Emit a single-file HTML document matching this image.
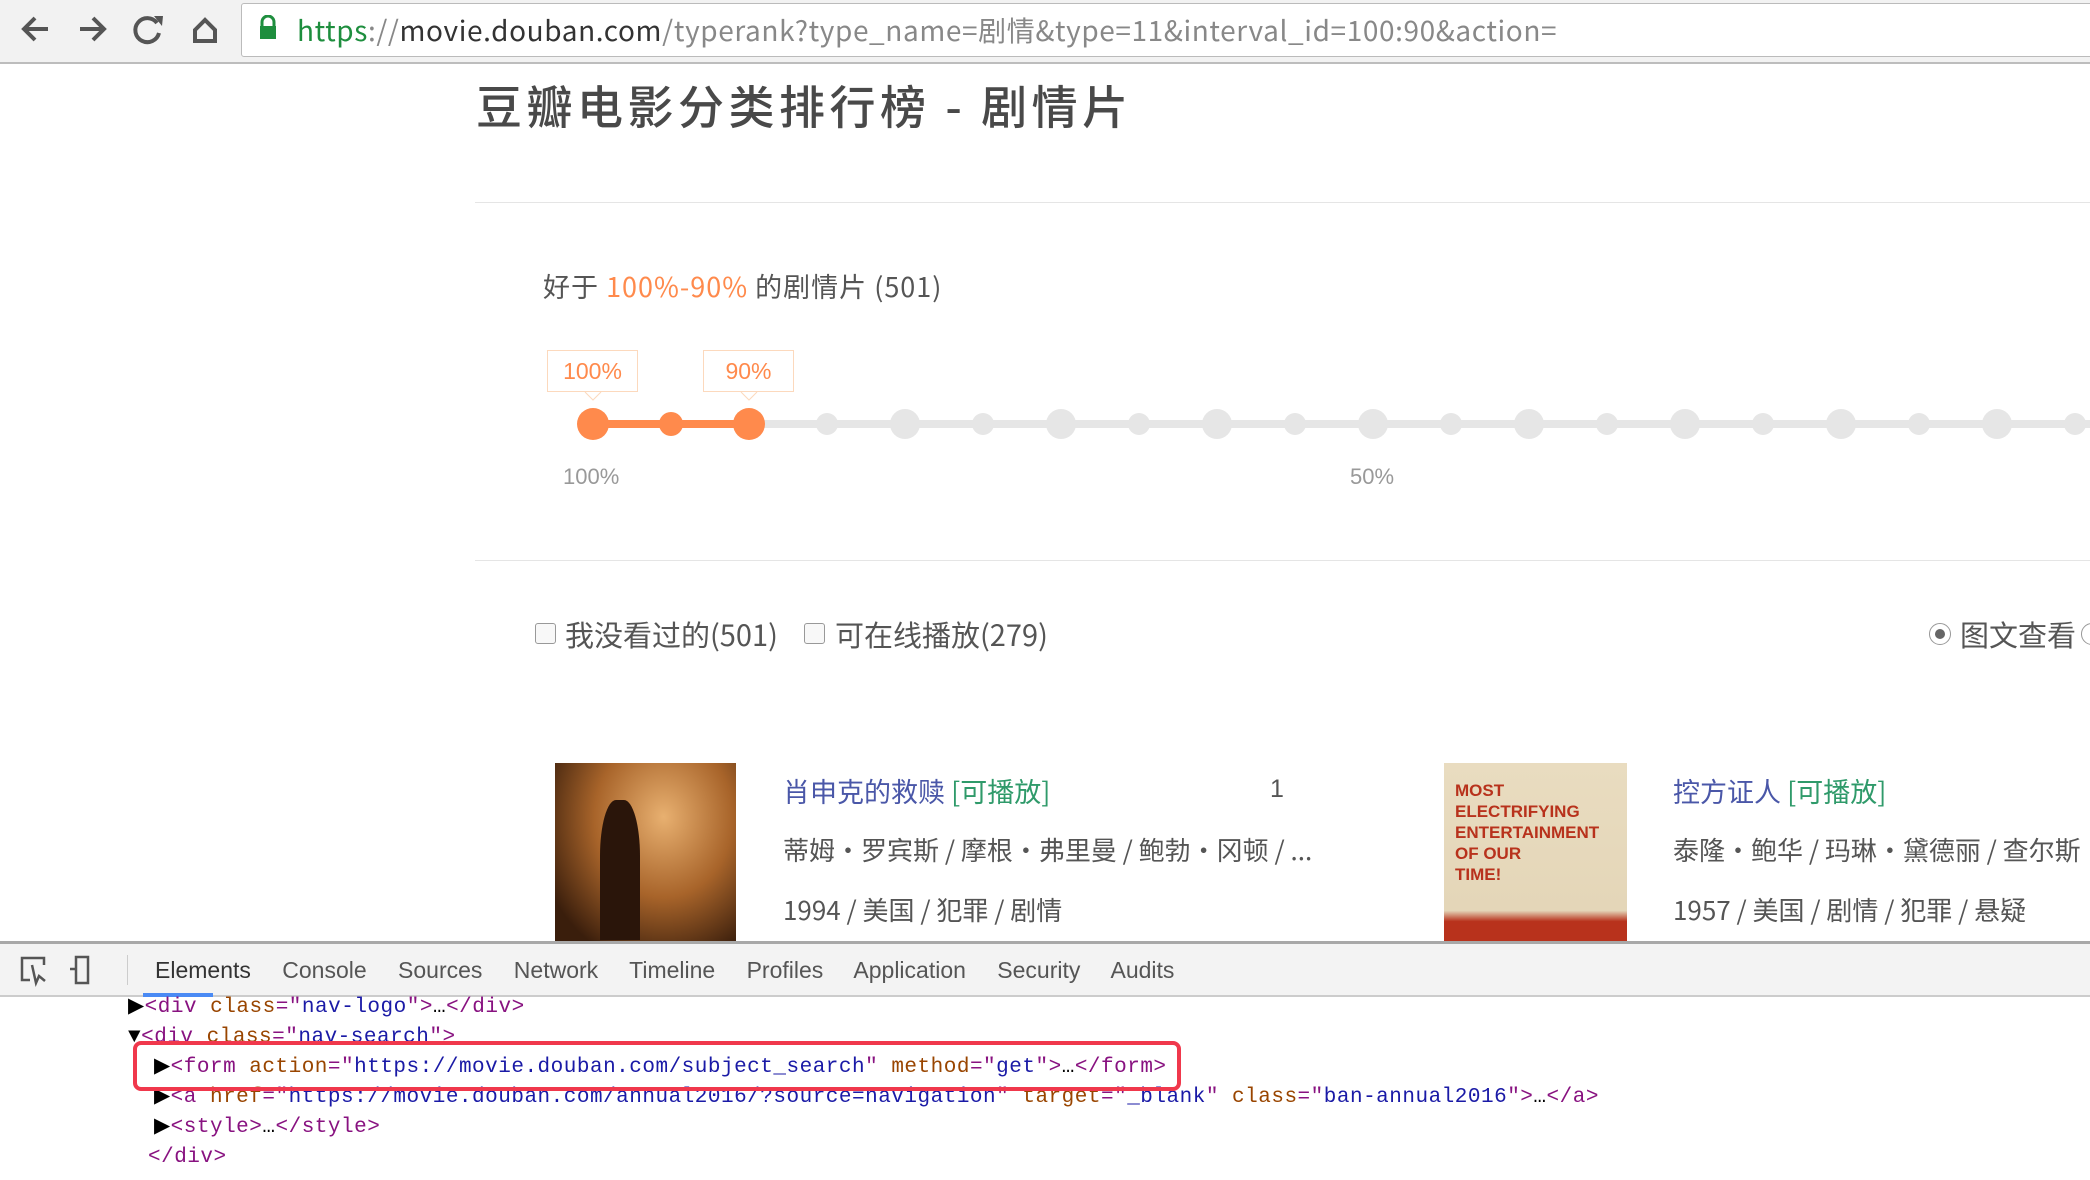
<!DOCTYPE html>
<html><head><meta charset="utf-8"><style>
*{margin:0;padding:0;box-sizing:border-box}
body{width:2090px;height:1180px;overflow:hidden;background:#fff;position:relative;font-family:"Liberation Sans","Noto Sans CJK SC",sans-serif}
.a{position:absolute;white-space:nowrap}
.cj{font-family:"Noto Sans CJK SC","Liberation Sans",sans-serif}
.mono{font-family:"Liberation Mono",monospace;font-size:21px;letter-spacing:0.5px}
.tg{color:#881280}.at{color:#994500}.av{color:#1a1aa6}
</style></head><body>
<div class="a" style="left:0;top:0;width:2090px;height:64px;background:#f2f2f2;border-bottom:2px solid #bdbdbd"></div>
<svg class="a" style="left:0;top:0" width="240" height="64">
<g stroke="#555" stroke-width="4" fill="none">
<path d="M48 29H24M35 18L24 29L35 40"/>
<path d="M80 29H104M93 18L104 29L93 40"/>
<path d="M157 23A12 12 0 1 0 159 33"/>
<path d="M195 30L205 20L215 30V41H195Z"/>
</g>
<path d="M154 16L163 16L162 26Z" fill="#555"/>
</svg>
<div class="a" style="left:241px;top:3px;width:1860px;height:54px;background:#fff;border:1px solid #bbb;border-radius:3px"></div>
<svg class="a" style="left:258px;top:15px" width="20" height="26"><path d="M4 11V7a6 6 0 0 1 12 0v4" stroke="#1e8e3e" stroke-width="3" fill="none"/><rect x="2" y="11" width="16" height="13" fill="#1e8e3e"/></svg>
<div class="a cj" style="left:297px;top:10px;font-size:28px;color:#333;letter-spacing:0.6px"><span style="color:#1e8e3e">https</span><span style="color:#888">://</span>movie.douban.com<span style="color:#888">/typerank?type_name=剧情&amp;type=11&amp;interval_id=100:90&amp;action=</span></div>
<div class="a cj" style="left:476px;top:72px;font-size:46px;color:#494949;font-weight:500;letter-spacing:4.5px">豆瓣电影分类排行榜 - 剧情片</div>
<div class="a" style="left:475px;top:202px;width:1620px;height:1px;background:#e5e5e5"></div>
<div class="a cj" style="left:543px;top:266px;font-size:27px;color:#555;letter-spacing:1px">好于 <span style="color:#ff8a4c">100%-90%</span> 的剧情片 (501)</div>
<div class="a" style="left:547px;top:350px;width:91px;height:42px;border:1px solid #fcd9bd;color:#ff8a4c;font-size:23px;text-align:center;line-height:40px;background:#fff">100%</div>
<div class="a" style="left:703px;top:350px;width:91px;height:42px;border:1px solid #fcd9bd;color:#ff8a4c;font-size:23px;text-align:center;line-height:40px;background:#fff">90%</div>
<svg class="a" style="left:0;top:380px" width="2090" height="70">
<line x1="593" y1="44" x2="2090" y2="44" stroke="#e6e6e6" stroke-width="8"/>
<line x1="593" y1="44" x2="749" y2="44" stroke="#ff8a4c" stroke-width="8"/>
<path d="M585 12L593 20L601 12" fill="#fff" stroke="#fcd9bd"/>
<path d="M741 12L749 20L757 12" fill="#fff" stroke="#fcd9bd"/>
<g fill="#e6e6e6">
<circle cx="827" cy="44" r="11"/><circle cx="905" cy="44" r="15"/><circle cx="983" cy="44" r="11"/><circle cx="1061" cy="44" r="15"/><circle cx="1139" cy="44" r="11"/><circle cx="1217" cy="44" r="15"/><circle cx="1295" cy="44" r="11"/><circle cx="1373" cy="44" r="15"/><circle cx="1451" cy="44" r="11"/><circle cx="1529" cy="44" r="15"/><circle cx="1607" cy="44" r="11"/><circle cx="1685" cy="44" r="15"/><circle cx="1763" cy="44" r="11"/><circle cx="1841" cy="44" r="15"/><circle cx="1919" cy="44" r="11"/><circle cx="1997" cy="44" r="15"/><circle cx="2075" cy="44" r="11"/>
</g>
<g fill="#ff8a4c"><circle cx="593" cy="44" r="16"/><circle cx="671" cy="44" r="12"/><circle cx="749" cy="44" r="16"/></g>
</svg>
<div class="a" style="left:563px;top:464px;font-size:22px;color:#999">100%</div>
<div class="a" style="left:1350px;top:464px;font-size:22px;color:#999">50%</div>
<div class="a" style="left:475px;top:560px;width:1620px;height:1px;background:#e5e5e5"></div>
<div class="a" style="left:535px;top:623px;width:21px;height:21px;border:1px solid #999;border-radius:3px;background:#f8f8f8"></div>
<div class="a cj" style="left:565px;top:613px;font-size:29px;color:#555">我没看过的(501)</div>
<div class="a" style="left:804px;top:623px;width:21px;height:21px;border:1px solid #999;border-radius:3px;background:#f8f8f8"></div>
<div class="a cj" style="left:835px;top:613px;font-size:29px;color:#555">可在线播放(279)</div>
<div class="a" style="left:1929px;top:623px;width:22px;height:22px;border:1px solid #999;border-radius:50%;background:#fff"></div>
<div class="a" style="left:1935px;top:629px;width:10px;height:10px;border-radius:50%;background:#666"></div>
<div class="a cj" style="left:1960px;top:613px;font-size:29px;color:#555">图文查看</div>
<div class="a" style="left:2081px;top:623px;width:22px;height:22px;border:1px solid #999;border-radius:50%"></div>
<div class="a" style="left:555px;top:763px;width:181px;height:180px;background:radial-gradient(ellipse at 60% 30%,#e8b070,#a8642a 45%,#3a1e0c 85%)"></div>
<div class="a" style="left:600px;top:800px;width:40px;height:140px;background:#2a150a;border-radius:40% 40% 0 0"></div>
<div class="a cj" style="left:783px;top:771px;font-size:27px;color:#4a57a8">肖申克的救赎 <span style="color:#2f9a6a">[可播放]</span></div>
<div class="a" style="left:1270px;top:775px;font-size:25px;color:#555">1</div>
<div class="a cj" style="left:783px;top:831px;font-size:26px;color:#555">蒂姆·罗宾斯 / 摩根·弗里曼 / 鲍勃·冈顿 / ...</div>
<div class="a cj" style="left:783px;top:891px;font-size:26px;color:#555">1994 / 美国 / 犯罪 / 剧情</div>
<div class="a" style="left:1444px;top:763px;width:183px;height:180px;background:linear-gradient(#e9dcc0 0,#e4d6b8 82%,#b8321c 88%,#b8321c 100%)"></div>
<div class="a" style="left:1455px;top:780px;width:100px;height:110px;color:#b8321c;font:bold 17px 'Liberation Sans Narrow','Liberation Sans',sans-serif;line-height:21px;white-space:normal">MOST ELECTRIFYING ENTERTAINMENT OF OUR TIME!</div>
<div class="a cj" style="left:1673px;top:771px;font-size:27px;color:#4a57a8">控方证人 <span style="color:#2f9a6a">[可播放]</span></div>
<div class="a cj" style="left:1673px;top:831px;font-size:26px;color:#555">泰隆·鲍华 / 玛琳·黛德丽 / 查尔斯·劳顿</div>
<div class="a cj" style="left:1673px;top:891px;font-size:26px;color:#555">1957 / 美国 / 剧情 / 犯罪 / 悬疑</div>
<div class="a" style="left:0;top:941px;width:2090px;height:56px;background:#f3f3f3;border-top:3px solid #a8a8a8;border-bottom:2px solid #ccc"></div>
<svg class="a" style="left:0;top:945px" width="120" height="50"><g stroke="#555" stroke-width="2.5" fill="none"><path d="M30 35H22V13H44V20"/><path d="M32 20L36 38L39 31L45 36"/><rect x="76" y="12" width="12" height="26"/><path d="M70 24H76"/></g></svg>
<div class="a" style="left:127px;top:955px;width:1px;height:30px;background:#ccc"></div>
<div class="a" style="left:155px;top:957px;font-size:23px;color:#333;word-spacing:25px">Elements<span style="color:#555"> Console Sources Network Timeline Profiles Application Security Audits</span></div>
<div class="a" style="left:143px;top:993px;width:70px;height:4px;background:#4a8af4"></div>
<div class="a mono" style="left:128px;top:993px;line-height:30px">
<div>▶<span class="tg">&lt;div </span><span class="at">class</span><span class="tg">="</span><span class="av">nav-logo</span><span class="tg">"&gt;</span>…<span class="tg">&lt;/div&gt;</span></div>
<div>▼<span class="tg">&lt;div </span><span class="at">class</span><span class="tg">="</span><span class="av">nav-search</span><span class="tg">"&gt;</span></div>
<div style="padding-left:26px">▶<span class="tg">&lt;form </span><span class="at">action</span><span class="tg">="</span><span class="av">https://movie.douban.com/subject_search</span><span class="tg">" </span><span class="at">method</span><span class="tg">="</span><span class="av">get</span><span class="tg">"&gt;</span>…<span class="tg">&lt;/form&gt;</span></div>
<div style="padding-left:26px">▶<span class="tg">&lt;a </span><span class="at">href</span><span class="tg">="</span><span class="av">https://movie.douban.com/annual2016/?source=navigation</span><span class="tg">" </span><span class="at">target</span><span class="tg">="</span><span class="av">_blank</span><span class="tg">" </span><span class="at">class</span><span class="tg">="</span><span class="av">ban-annual2016</span><span class="tg">"&gt;</span>…<span class="tg">&lt;/a&gt;</span></div>
<div style="padding-left:26px">▶<span class="tg">&lt;style&gt;</span>…<span class="tg">&lt;/style&gt;</span></div>
<div style="padding-left:20px"><span class="tg">&lt;/div&gt;</span></div>
</div>
<div class="a" style="left:133px;top:1041px;width:1048px;height:50px;border:4px solid #f0384c;border-radius:8px"></div>
</body></html>
